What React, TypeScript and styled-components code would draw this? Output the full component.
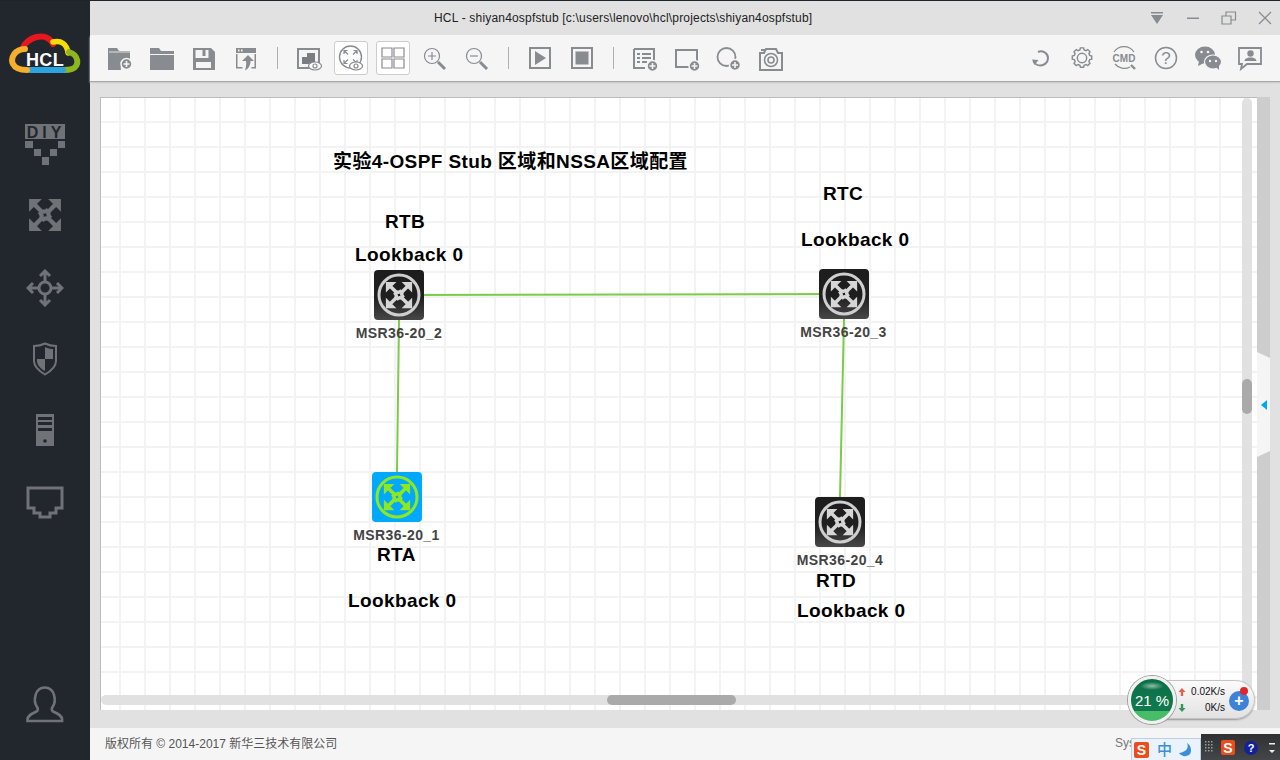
import React from "react";
import styled, { createGlobalStyle } from "styled-components";

const GREY = "#888b90";
const SIDE = "#6f7277";
const FONT = `"Liberation Sans", "Noto Sans CJK SC", sans-serif`;

const Global = createGlobalStyle`
  html, body { margin: 0; padding: 0; width: 1280px; height: 760px; overflow: hidden; background: #e1e1e1; }
  #root { width: 1280px; height: 760px; }
  * { box-sizing: border-box; }
`;

const Shell = styled.div`
  position: relative; width: 1280px; height: 760px; display: flex;
  font-family: ${FONT}; border-top: 1px solid #1f242b; overflow: hidden;
`;
const Sidebar = styled.nav`
  width: 90px; height: 100%; background: #22272e; display: flex; flex-direction: column;
  align-items: center; padding-top: 31px;
`;
const SideSlot = styled.div`
  width: 90px; height: 71.5px; display: flex; align-items: center; justify-content: center;
  &:nth-child(2) svg { margin-top: -3px; }
`;
const SideGroup = styled.div`
  margin-top: 35px; display: flex; flex-direction: column;
`;
const SideBottom = styled(SideSlot)`
  margin-top: auto; margin-bottom: 20px;
`;
const Main = styled.div`
  flex: 1; display: flex; flex-direction: column; min-width: 0;
`;
const TitleBar = styled.header`
  height: 34px; background: #e1e1e1; display: flex; align-items: center; padding-left: 344px;
  font-size: 12px; color: #222; position: relative;
`;
const TitleText = styled.span`
  flex: 1; letter-spacing: 0.185px; white-space: nowrap;
`;
const WinControls = styled.div`
  display: flex; align-items: center; height: 100%; margin-right: -3px;
`;
const WinButton = styled.span`
  width: 36px; height: 34px; display: flex; align-items: center; justify-content: center;
`;
const Toolbar = styled.div`
  height: 46px; background: #f5f5f5; display: flex; align-items: center; justify-content: space-between;
  padding: 0 9px; box-shadow: 0 1px 1px #a8a8a8, 0 2px 2px #cfcfcf; position: relative; z-index: 2;
`;
const ToolGroup = styled.div`
  display: flex; align-items: center;
`;
const Tool = styled.span<{ $boxed?: boolean }>`
  width: 42px; height: 46px; display: flex; align-items: center; justify-content: center;
  svg { display: block; }
  ${p => p.$boxed ? `
    & > div { width: 34px; height: 34px; background: #fff; border: 1px solid #cdcdcd; border-radius: 3px;
      display: flex; align-items: center; justify-content: center; }
  ` : ""}
`;
const Sep = styled.span`
  width: 21px; height: 46px; display: flex; align-items: center; justify-content: center;
  &::before { content: ""; width: 1px; height: 22px; background: #aeb0b3; }
`;
const Workspace = styled.div`
  flex: 1; min-height: 0; background: #e1e1e1; padding: 16px 10px 18px 10px; display: flex;
`;
const Canvas = styled.main`
  position: relative; width: 1157px; height: 613px; overflow: hidden; background-color: #fff;
  border-top: 1px solid #bcbcbc; border-left: 1px solid #bcbcbc;
  background-image: linear-gradient(to right, #f3f3f3 2px, transparent 2px), linear-gradient(to bottom, #f3f3f3 2px, transparent 2px);
  background-size: 25px 25px; background-position: 18px 23px;
`;
const Rail = styled.div`
  position: relative; width: 13px; height: 613px; background: #cdcdcd;
`;
const Flap = styled.div`
  position: absolute; left: 0; top: 255px; width: 13px; height: 105px; background: #f5f5f5;
  clip-path: polygon(0 0, 100% 6px, 100% 99px, 0 100%); display: flex; align-items: center; justify-content: center;
  &::before { content: ""; width: 0; height: 0; margin-left: 1px; border-style: solid;
    border-width: 5.5px 6px 5.5px 0; border-color: transparent #00a8f0 transparent transparent; }
`;
const VTrack = styled.div`
  position: absolute; left: 1141px; top: 0; width: 10px; height: 607px; background: #e1e1e1; border-radius: 5px 5px 0 0;
`;
const VThumb = styled.div`
  position: absolute; left: 0; top: 281px; width: 10px; height: 35px; background: #aaa; border-radius: 5px;
`;
const HTrack = styled.div`
  position: absolute; left: 0; top: 597px; width: 1151px; height: 10px; background: #e1e1e1; border-radius: 5px 0 0 5px;
`;
const HThumb = styled.div`
  position: absolute; left: 506px; top: 0; width: 129px; height: 10px; background: #aaa; border-radius: 5px;
`;
const Links = styled.svg`
  position: absolute; left: 0; top: 0; width: 100%; height: 100%;
`;
const CanvasNote = styled.span<{ $x: number; $y: number }>`
  position: absolute; left: ${p => p.$x - 101}px; top: ${p => p.$y - 97}px; font-size: 19px; line-height: 20px;
  font-weight: 700; color: #000; white-space: nowrap; letter-spacing: 0.39px;
`;
const Node = styled.div<{ $x: number; $y: number }>`
  position: absolute; left: ${p => p.$x - 101}px; top: ${p => p.$y - 98}px; width: 50px; height: 50px;
`;
const Tile = styled.div<{ $active?: boolean }>`
  width: 50px; height: 50px; border-radius: 4px; display: flex; align-items: center; justify-content: center;
  background: ${p => p.$active ? "#00a8ff" : "linear-gradient(#1d1d1d, #1f1f1f 55%, #474747)"};
`;
const NodeLabel = styled.span<{ $shift: number }>`
  position: absolute; top: 55px; left: 50%; transform: translateX(calc(-50% + ${p => p.$shift}px));
  font-size: 14px; line-height: 16px; font-weight: 700; color: #444; white-space: nowrap; letter-spacing: 0.4px;
`;
const Footer = styled.footer`
  height: 32px; background: #f5f5f5; display: flex; align-items: center; justify-content: space-between;
  padding: 0 0 3px 15px; font-size: 12px; color: #555;
`;
const FooterRight = styled.span`
  margin-right: 145px; color: #777;
`;
const Monitor = styled.div`
  position: absolute; left: 1128px; top: 674px; width: 127px; height: 48px; z-index: 5;
`;
const Pill = styled.div`
  position: absolute; left: 10px; top: 5px; width: 117px; height: 39px; border-radius: 20px;
  background: linear-gradient(#fbfbfb, #e2e2e2); border: 1px solid #c3c3c3; box-shadow: 0 1px 2px rgba(0,0,0,.35);
  padding-right: 29px; display: flex; flex-direction: column; justify-content: center; align-items: flex-end;
  font-size: 10px; line-height: 16px; color: #111;
`;
const SpeedRow = styled.div`
  display: flex; justify-content: flex-end; align-items: center; position: relative; width: 47px;
  svg { position: absolute; left: 0; top: 4px; }
`;
const Gauge = styled.div`
  position: absolute; left: 0; top: 1px; width: 48px; height: 48px; border-radius: 50%; border: 3px solid #f1f1f1;
  box-shadow: 0 0 0 1px #9c9c9c;
  background: radial-gradient(ellipse 12px 4px at 50% 7px, rgba(255,255,255,.55), transparent), linear-gradient(#0c6e47 0, #107a4e 76%, #48bd68 76%);
  color: #fff; font-size: 15px; display: flex; align-items: center; justify-content: center;
`;
const AddBubble = styled.div`
  position: absolute; left: 101px; top: 16px; width: 20px; height: 20px; border-radius: 50%;
  background: #3e82d8; color: #fff; font-size: 16px; font-weight: 700; line-height: 20px; text-align: center;
  &::after { content: ""; position: absolute; left: 11px; top: -4px; width: 8px; height: 8px; border-radius: 50%; background: #e0252c; }
`;
const ImeBar = styled.div`
  position: absolute; left: 1131px; top: 737px; width: 70px; height: 23px; background: #eaf3fb; border: 1px solid #bcd0e2;
  display: flex; align-items: center; padding-left: 2px; z-index: 6; color: #3a8fd8;
`;
const SogouTile = styled.span`
  width: 15px; height: 16px; background: #ee4b1c; color: #fff; font-size: 14px; font-weight: 700; line-height: 16px;
  text-align: center; border-radius: 2px; flex: none; font-family: ${FONT};
`;
const ImeChar = styled.span`
  margin-left: 8px; font-size: 15px; font-weight: 500; line-height: 18px;
`;
const MoonIcon = styled.svg`
  margin-left: 6px; flex: none;
`;
const Tray = styled.div`
  position: absolute; left: 1201px; top: 733px; width: 79px; height: 27px; background: linear-gradient(#2e3032, #45474a);
  display: flex; align-items: center; padding-left: 4px; z-index: 6;
`;
const TrayTile = styled(SogouTile)`
  margin-left: 7px; width: 14px; height: 15px;
`;
const HelpDot = styled.span`
  width: 14px; height: 14px; border-radius: 50%; background: #14219a; color: #fff; font-size: 11px; font-weight: 700;
  line-height: 14px; text-align: center; margin-left: 9px;
`;
const TrayArrow = styled.svg`
  margin-left: 10px; flex: none;
`;

const Ic = ({ w = 36, h = 36, children }: { w?: number; h?: number; children: React.ReactNode }) => (
  <svg width={w} height={h} viewBox={`0 0 ${w} ${h}`} fill={GREY}>{children}</svg>
);
const PlusDot = ({ x, y, r = 5.5 }: { x: number; y: number; r?: number }) => (
  <g>
    <circle cx={x} cy={y} r={r} fill={GREY} stroke="#f5f5f5" strokeWidth="1.5" />
    <path d={`M${x - 3} ${y}h6M${x} ${y - 3}v6`} stroke="#f5f5f5" strokeWidth="1.6" />
  </g>
);
const Eye = ({ x, y }: { x: number; y: number }) => (
  <g>
    <ellipse cx={x} cy={y} rx="6.5" ry="4" fill="#fff" stroke={GREY} strokeWidth="1.2" />
    <circle cx={x} cy={y} r="2" fill="none" stroke={GREY} strokeWidth="1.2" />
  </g>
);
const Arrows = ({ fill }: { fill: string }) => (
  <g>
    {[0, 90, 180, 270].map(a => (
      <g key={a} transform={`rotate(${a} 16 16)`}>
        <path d="M1 1h12L1 13z" fill={fill} />
        <path d="M6 6l5.500 5.500c2.200 2.200 5.500 1.800 7.500-1" fill="none" stroke={fill} strokeWidth="4" />
      </g>
    ))}
  </g>
);
const RouterFace = ({ ring, fill }: { ring: string; fill: string }) => (
  <svg width="44" height="44" viewBox="0 0 44 44">
    <circle cx="22" cy="22" r="20" fill="none" stroke={ring} strokeWidth="3" />
    <g transform="translate(8 8) scale(.875)"><Arrows fill={fill} /></g>
  </svg>
);

const Logo = () => (
  <svg width="72" height="42" viewBox="0 0 72 42" fill="none" strokeWidth="6" strokeLinecap="round">
    <path d="M14 16C17 6 37 -2 44 12" stroke="#e5171f" />
    <path d="M44 10c8-2 14 2 15 11" stroke="#f6de04" strokeWidth="5.5" />
    <path d="M60 20c10 3 11 14 3 17-2 .7-5 1-8 1" stroke="#8cb71f" />
    <path d="M21 38h33" stroke="#2aa5e0" />
    <path d="M16 17C6 17 1 26 4 32c2 4 7 6 14 6" stroke="#f6ae2d" />
    <text x="36" y="34" textAnchor="middle" fontFamily="Liberation Sans" fontWeight="700" fontSize="18" fill="#fff" stroke="none" letterSpacing="0.3">HCL</text>
  </svg>
);

const DiyIcon = () => (
  <svg width="42" height="41" viewBox="0 0 42 41" fill={SIDE}>
    <rect x="1" y="0" width="40" height="15" />
    <text x="22" y="13.500" textAnchor="middle" fontFamily="Liberation Sans" fontWeight="700" fontSize="16" fill="#22272e" letterSpacing="4">DIY</text>
    <path d="M1 17h8v7H1zM34 17h7v7h-7zM10 25h7v7h-7zM26 25h7v7h-7zM18 33h7v8h-7z" />
  </svg>
);
const CrossIcon = () => (
  <svg width="34" height="34" viewBox="0 0 32 32"><Arrows fill={SIDE} /></svg>
);
const MoveIcon = () => (
  <svg width="38" height="38" viewBox="0 0 38 38" fill="none" stroke={SIDE} strokeWidth="3">
    <circle cx="19" cy="19" r="6" />
    <path d="M19 13V2M19 25v11M13 19H2M25 19h11M14 7l5-5 5 5M14 31l5 5 5-5M7 14l-5 5 5 5M31 14l5 5-5 5" />
  </svg>
);
const ShieldIcon = () => (
  <svg width="26" height="34" viewBox="0 0 26 34">
    <path d="M13 1.500c4 2 7 2.500 11 2.500v15c0 6-5 10-11 13.500C7 29 2 25 2 19V4c4 0 7-.5 11-2.500z" fill="none" stroke={SIDE} strokeWidth="2" />
    <path d="M13 5c3 1.500 5 2 8 2v10h-8zM13 17v12c-4-2-8-6-8-10v-2z" fill={SIDE} />
  </svg>
);
const ServerIcon = () => (
  <svg width="20" height="33" viewBox="0 0 20 33" fill={SIDE}>
    <path fillRule="evenodd" d="M1 0h18v32H1zM3 3v3h14V3zM3 8v3h14V8zM3 14v3h14v-3z" />
    <circle cx="10" cy="27" r="1.800" fill="#22272e" />
  </svg>
);
const PortIcon = () => (
  <svg width="38" height="33" viewBox="0 0 38 33" fill="none" stroke={SIDE} strokeWidth="3">
    <path d="M2 2h34v20h-6v5h-6v4H14v-4H8v-5H2z" />
  </svg>
);
const UserIcon = () => (
  <svg width="38" height="38" viewBox="0 0 38 38" fill="none" stroke={SIDE} strokeWidth="2.600">
    <path d="M1.500 36v-1.500c0-4 4-5.500 9-8 2-1 1.500-3 .3-5-3.500-5-2.500-19 8-19s11.500 14 8 19c-1.200 2-1.700 4 .3 5 5 2.500 9 4 9 8V36z" />
  </svg>
);

const FolderPlus = () => (
  <Ic><path d="M6 8h9l2 3h11v9h-3a8 8 0 0 0-6 10H6z" /><path d="M7 12h21" stroke="#f5f5f5" strokeWidth=".8" /><PlusDot x={24.500} y={24} /></Ic>
);
const FolderOpen = () => (
  <Ic><path d="M6 8h9l2 3h13v3H6zM6 15h24v15H6z" /></Ic>
);
const Save = () => (
  <Ic>
    <path fillRule="evenodd" d="M7 8h18l4 4v18H7zM9.500 10v8h13v-8h-3v6h-3v-6zM10 22v6h15v-6z" />
  </Ic>
);
const Export = () => (
  <Ic>
    <path fillRule="evenodd" d="M8 8h20v5H8zM10 9.500v2h1.500v-2zM13 9.500v2h1.500v-2z" />
    <path d="M8 14h1.500v13h5v1.500H8zM28 14h-1.500v13h-3v1.500H28z" />
    <path d="M20 15l6 6h-3.500c0 4-2 8-5.500 9.500 1-3 1.500-6 1-9.500h-4z" />
  </Ic>
);
const ScreenEye = () => (
  <Ic>
    <path d="M7 9h21v19H7z" fill="none" stroke={GREY} strokeWidth="2" />
    <path d="M11 24v-7h5v-4h8v11z" fill="#7a7d82" />
    <Eye x={24} y={26} />
  </Ic>
);
const RouterEye = () => (
  <Ic w={32} h={32}>
    <circle cx="15.500" cy="15" r="11" fill="none" stroke={GREY} strokeWidth="1.400" />
    <g transform="translate(7.500 7) scale(.5)" fill="none" stroke={GREY} strokeWidth="2.400">
      <path d="M3 3l8 8M3 10V3h7M29 3l-8 8M22 3h7v7M3 29l8-8M3 22v7h7M29 29l-8-8M22 29h7v-7" />
    </g>
    <Eye x={21} y={24} />
  </Ic>
);
const Quad = () => (
  <Ic w={26} h={26}>
    <path d="M2 3h10v9H2zM14 3h10v9H14zM2 14h10v9H2zM14 14h10v9H14z" fill="none" stroke={GREY} strokeWidth="1.200" />
  </Ic>
);
const Zoom = ({ plus }: { plus?: boolean }) => (
  <Ic>
    <circle cx="15" cy="16" r="7.500" fill="none" stroke={GREY} strokeWidth="1.200" />
    <path d={plus ? "M11 16h8M15 12v8" : "M11 16h8"} stroke={GREY} strokeWidth="1.200" />
    <path d="M21 22l7 7" stroke={GREY} strokeWidth="3" />
  </Ic>
);
const Play = () => (
  <Ic><path d="M8 8h20v20H8z" fill="none" stroke={GREY} strokeWidth="2" /><path d="M13 11l11 7-11 7z" /></Ic>
);
const Stop = () => (
  <Ic><path d="M8 8h20v20H8z" fill="none" stroke={GREY} strokeWidth="2" /><path d="M11.500 11.500h13v13h-13z" /></Ic>
);
const ListPlus = () => (
  <Ic>
    <path d="M7 9h20v12M18 28H7V9" fill="none" stroke={GREY} strokeWidth="2" />
    <path d="M10 13h3v2h-3zM15 13h9v2h-9zM10 17h3v2h-3zM15 17h9v2h-9zM10 21h3v2h-3zM15 21h5v2h-5z" />
    <PlusDot x={25.500} y={26} />
  </Ic>
);
const RectPlus = () => (
  <Ic><path d="M20 27H7V10h21v11" fill="none" stroke={GREY} strokeWidth="2" /><PlusDot x={25.500} y={26} /></Ic>
);
const CirclePlus = () => (
  <Ic><circle cx="15.500" cy="17" r="9" fill="none" stroke={GREY} strokeWidth="1.800" /><PlusDot x={24} y={25} r={5.500} /></Ic>
);
const Camera = () => (
  <Ic>
    <path d="M7 13h4l2-4h10l2 4h4v17H7z" fill="none" stroke={GREY} strokeWidth="2" />
    <circle cx="18" cy="20" r="6.500" fill="none" stroke={GREY} strokeWidth="1.600" />
    <circle cx="18" cy="20" r="3" fill="none" stroke={GREY} strokeWidth="1.600" />
    <path d="M8 9h4v2H8z" />
  </Ic>
);
const Refresh = () => (
  <Ic>
    <path d="M16 12c4.500-2 10 1 10 6s-4.500 7.500-7.500 7.500c-3.500 0-6-2-7-4.500" fill="none" stroke={GREY} strokeWidth="2" />
    <path d="M10 19.500l6.500 .5-4 5z" />
  </Ic>
);
const Gear = () => (
  <Ic>
    <g fill="none" stroke={GREY} strokeWidth="2" transform="translate(18 18) scale(.72) translate(-18 -18)">
      <path d="M15.800 4h4.400l.7 2.800 2.600 1.100 2.500-1.500 3.100 3.100-1.500 2.500 1.100 2.600 2.800.7v4.400l-2.800.7-1.100 2.600 1.500 2.500-3.100 3.100-2.500-1.500-2.600 1.100-.7 2.800h-4.400l-.7-2.800-2.600-1.100-2.500 1.500-3.100-3.100 1.500-2.500-1.100-2.600-2.800-.7v-4.400l2.800-.7 1.100-2.600-1.500-2.500 3.100-3.100 2.500 1.500 2.600-1.100z" transform="translate(0 -.1)" />
      <circle cx="18" cy="18" r="6.500" />
    </g>
  </Ic>
);
const Cmd = () => (
  <Ic>
    <path d="M8 12a12 12 0 0 1 20 0" fill="none" stroke={GREY} strokeWidth="1.200" />
    <path d="M9 24a12 12 0 0 0 15 3" fill="none" stroke={GREY} strokeWidth="1.200" />
    <text x="18" y="21.500" textAnchor="middle" fontFamily="Liberation Sans" fontWeight="700" fontSize="10" fill={GREY}>CMD</text>
    <path d="M25 25l4 4" stroke={GREY} strokeWidth="2.400" />
  </Ic>
);
const Help = () => (
  <Ic>
    <circle cx="18" cy="18" r="10.500" fill="none" stroke={GREY} strokeWidth="1.500" />
    <text x="18" y="24" textAnchor="middle" fontFamily="Liberation Sans" fontSize="17" fill={GREY}>?</text>
  </Ic>
);
const WeChat = () => (
  <Ic>
    <ellipse cx="15" cy="15" rx="10" ry="8.500" />
    <path d="M9 21l-1 5 6-3z" />
    <ellipse cx="23" cy="22" rx="8.500" ry="7" stroke="#f5f5f5" strokeWidth="1.200" />
    <path d="M26 27l3 3v-5z" />
    <circle cx="11.500" cy="12" r="1.300" fill="#f5f5f5" /><circle cx="18" cy="12" r="1.300" fill="#f5f5f5" />
    <circle cx="20" cy="21" r="1.200" fill="#f5f5f5" /><circle cx="26" cy="21" r="1.200" fill="#f5f5f5" />
  </Ic>
);
const Feedback = () => (
  <Ic>
    <path d="M7 8h22v16H15l-6 5 1-5H7z" fill="none" stroke={GREY} strokeWidth="1.800" />
    <circle cx="18.500" cy="13.500" r="3.200" /><path d="M12.500 21c0-2.500 3-3 4-3.500h4c1 .5 4 1 4 3.500z" />
  </Ic>
);

const tools = {
  a: [<FolderPlus />, <FolderOpen />, <Save />, <Export />],
  b: [<Zoom plus />, <Zoom />],
  c: [<Play />, <Stop />],
  d: [<ListPlus />, <RectPlus />, <CirclePlus />, <Camera />],
  r: [<Refresh />, <Gear />, <Cmd />, <Help />, <WeChat />, <Feedback />],
};
const side = [<DiyIcon />, <CrossIcon />, <MoveIcon />, <ShieldIcon />, <ServerIcon />, <PortIcon />];

const nodes = [
  { x: 374, y: 270, label: "MSR36-20_2", shift: 0, active: false },
  { x: 819, y: 269, label: "MSR36-20_3", shift: -0.5, active: false },
  { x: 372, y: 472, label: "MSR36-20_1", shift: -0.5, active: true },
  { x: 815, y: 497, label: "MSR36-20_4", shift: 0, active: false },
];
const notes: [string, number, number][] = [
  ["实验4-OSPF Stub 区域和NSSA区域配置", 333, 151],
  ["RTB", 385, 211], ["Lookback 0", 355, 244], ["RTC", 823, 183], ["Lookback 0", 801, 229],
  ["RTA", 377, 544], ["Lookback 0", 348, 590], ["RTD", 816, 570], ["Lookback 0", 797, 600],
];

export default function App() {
  return (
    <Shell>
      <Global />
      <Sidebar>
        <Logo />
        <SideGroup>
          {side.map((s, i) => <SideSlot key={i}>{s}</SideSlot>)}
        </SideGroup>
        <SideBottom><UserIcon /></SideBottom>
      </Sidebar>
      <Main>
        <TitleBar>
          <TitleText>HCL - shiyan4ospfstub [c:\users\lenovo\hcl\projects\shiyan4ospfstub]</TitleText>
          <WinControls>
            <WinButton>
              <svg width="14" height="14" viewBox="0 0 14 14" fill={GREY}><path d="M1 1h12v1.500H1zM1 4h12L7 13z" /></svg>
            </WinButton>
            <WinButton>
              <svg width="14" height="14" viewBox="0 0 14 14" fill={GREY}><path d="M1 6.500h12V8H1z" /></svg>
            </WinButton>
            <WinButton>
              <svg width="16" height="14" viewBox="0 0 16 14" fill="none" stroke={GREY} strokeWidth="1.200"><path d="M1 5h9v8H1zM5 5V1h9.500v8H10" /></svg>
            </WinButton>
            <WinButton>
              <svg width="14" height="14" viewBox="0 0 14 14" fill="none" stroke={GREY} strokeWidth="1.300"><path d="M1 1l12 12M13 1L1 13" /></svg>
            </WinButton>
          </WinControls>
        </TitleBar>
        <Toolbar>
          <ToolGroup>
            {tools.a.map((t, i) => <Tool key={i}>{t}</Tool>)}
            <Sep />
            <Tool><ScreenEye /></Tool>
            <Tool $boxed><div><RouterEye /></div></Tool>
            <Tool $boxed><div><Quad /></div></Tool>
            {tools.b.map((t, i) => <Tool key={i}>{t}</Tool>)}
            <Sep />
            {tools.c.map((t, i) => <Tool key={i}>{t}</Tool>)}
            <Sep />
            {tools.d.map((t, i) => <Tool key={i}>{t}</Tool>)}
          </ToolGroup>
          <ToolGroup>
            {tools.r.map((t, i) => <Tool key={i}>{t}</Tool>)}
          </ToolGroup>
        </Toolbar>
        <Workspace>
          <Canvas>
            <Links>
              <g stroke="#7ccb48" strokeWidth="2" fill="none">
                <path d="M298 197L743 196M298 222L296 374M743 221L739 399" />
              </g>
            </Links>
            {notes.map(([t, x, y], i) => <CanvasNote key={i} $x={x} $y={y}>{t}</CanvasNote>)}
            {nodes.map(n => (
              <Node key={n.label} $x={n.x} $y={n.y}>
                <Tile $active={n.active}>
                  {n.active
                    ? <RouterFace ring="#8ee81f" fill="#8ee81f" />
                    : <RouterFace ring="#cfcfcf" fill="#d6d6d6" />}
                </Tile>
                <NodeLabel $shift={n.shift}>{n.label}</NodeLabel>
              </Node>
            ))}
            <VTrack><VThumb /></VTrack>
            <HTrack><HThumb /></HTrack>
          </Canvas>
          <Rail><Flap /></Rail>
        </Workspace>
        <Footer>
          <span>版权所有 © 2014-2017 新华三技术有限公司</span>
          <FooterRight>Sys</FooterRight>
        </Footer>
      </Main>
      <Monitor>
        <Pill>
          <SpeedRow>
            <svg width="8" height="8" viewBox="0 0 8 8" fill="#e4604a"><path d="M4 0l3.500 4H5.200v4H2.800V4H.5z" /></svg>
            0.02K/s
          </SpeedRow>
          <SpeedRow>
            <svg width="8" height="8" viewBox="0 0 8 8" fill="#2f9a57"><path d="M4 8L.5 4h2.300V0h2.400v4h2.300z" /></svg>
            0K/s
          </SpeedRow>
        </Pill>
        <Gauge>21 %</Gauge>
        <AddBubble>+</AddBubble>
      </Monitor>
      <ImeBar>
        <SogouTile>S</SogouTile>
        <ImeChar>中</ImeChar>
        <MoonIcon width="14" height="14" viewBox="0 0 14 14" fill="#3a8fd8"><path d="M9 0c2 4 0 9-8 10 3 4 8 4 11 1 2-3 1-9-3-11z" /></MoonIcon>
      </ImeBar>
      <Tray>
        <svg width="9" height="13" viewBox="0 0 9 13" fill="#9a9a9a">
          {[0, 3, 6, 9].flatMap(y => [0, 3, 6].map(x => <rect key={`${x}-${y}`} x={x} y={y} width="1.500" height="1.500" />))}
        </svg>
        <TrayTile>S</TrayTile>
        <HelpDot>?</HelpDot>
        <TrayArrow width="8" height="14" viewBox="0 0 8 14" fill="#eee"><path d="M1 2h6v1.500H1zM1 9h6l-3 3z" /></TrayArrow>
      </Tray>
    </Shell>
  );
}
